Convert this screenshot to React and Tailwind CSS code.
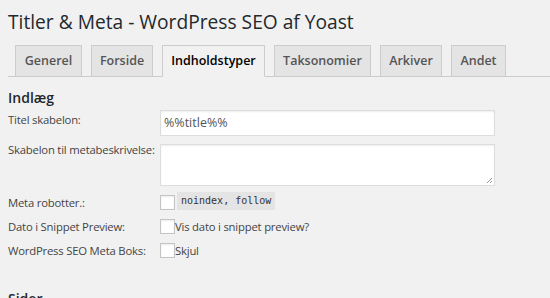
import React from 'react';

const tabs = [
  { label: 'Generel', w: 'w-[67px]' },
  { label: 'Forside', w: 'w-[62px]' },
  { label: 'Indholdstyper', w: 'w-[103px]', active: true },
  { label: 'Taksonomier', w: 'w-[97px]' },
  { label: 'Arkiver', w: 'w-[62px]' },
  { label: 'Andet', w: 'w-[55px]' },
];

const Checkbox = () => (
  <span className="mt-[2px] inline-block w-[15px] h-[15px] bg-white border border-[#c4c4c4] shadow-[inset_0_1px_2px_rgba(0,0,0,0.08)] shrink-0" />
);

const Row = ({ label, children, className = '' }) => (
  <div className={`flex items-start ${className}`}>
    <div className="w-[152px] shrink-0 whitespace-nowrap text-[11.3px] tracking-[-0.2px] leading-[20px] text-[#444]">{label}</div>
    <div className="flex-1">{children}</div>
  </div>
);

export default function App() {
  return (
    <div className="w-[550px] h-[298px] overflow-hidden bg-[#f1f1f1] font-['Open_Sans',sans-serif] text-[#444]">
      <div className="pl-2">
        <h2 className="pt-[9px] text-[19.2px] leading-[26px] font-normal text-[#23282d]">
          Titler &amp; Meta - WordPress SEO af Yoast
        </h2>

        {/* tabs */}
        <div className="mt-[10px] flex items-end gap-[9px] border-b border-[#ccc] pl-[7px]">
          {tabs.map((t) => (
            <div
              key={t.label}
              className={
                t.active
                  ? `${t.w} h-[32px] -mb-px text-center border border-[#ccc] border-b-[#f1f1f1] bg-[#f1f1f1] text-[12.5px] leading-[30px] font-semibold text-black`
                  : `${t.w} h-[31px] text-center border border-[#ccc] border-b-0 bg-[#e4e4e4] text-[12.5px] leading-[30px] font-semibold text-[#555]`
              }
            >
              {t.label}
            </div>
          ))}
        </div>

        <h4 className="mt-[11px] text-[14px] leading-[20px] font-semibold text-[#23282d]">Indlæg</h4>

        <Row label="Titel skabelon:" className="mt-[2px]">
          <div className="w-[335px] h-[26px] bg-white border border-[#ddd] shadow-[inset_0_1px_2px_rgba(0,0,0,0.07)] px-[3px] text-[12.5px] leading-[24px] text-[#555]">
            %%title%%
          </div>
        </Row>

        <Row label="Skabelon til metabeskrivelse:" className="mt-[4px]">
          <div className="relative mt-[4px] w-[335px] h-[42px] bg-white border border-[#ddd] shadow-[inset_0_1px_2px_rgba(0,0,0,0.07)]">
            <svg className="absolute right-[1px] bottom-[1px]" width="8" height="8" viewBox="0 0 8 8">
              <path d="M7 2 L2 7 M7 5 L5 7" stroke="#999" strokeWidth="1" />
            </svg>
          </div>
        </Row>

        <Row label="Meta robotter.:" className="mt-[7px]">
          <div className="flex items-start">
            <Checkbox />
            <code className="ml-[2px] -mt-px bg-[#e4e4e4] px-[4px] h-[18px] text-[10px] leading-[18px] font-['DejaVu_Sans_Mono',monospace] text-[#333]">
              noindex, follow
            </code>
          </div>
        </Row>

        <Row label="Dato i Snippet Preview:" className="mt-[4px]">
          <div className="flex items-start">
            <Checkbox />
            <span className="text-[11.3px] tracking-[-0.2px] leading-[20px] text-[#444]">Vis dato i snippet preview?</span>
          </div>
        </Row>

        <Row label="WordPress SEO Meta Boks:" className="mt-[4px]">
          <div className="flex items-start">
            <Checkbox />
            <span className="text-[11.3px] tracking-[-0.2px] leading-[20px] text-[#444]">Skjul</span>
          </div>
        </Row>

        <h4 className="mt-[28px] text-[14px] leading-[20px] font-semibold text-[#23282d]">Sider</h4>
      </div>
    </div>
  );
}
